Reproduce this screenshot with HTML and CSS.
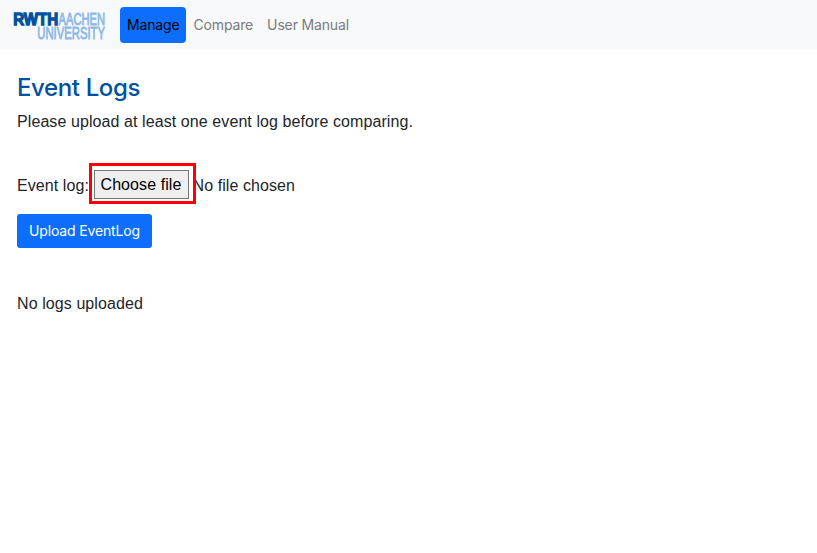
FILE: index.html
```
<!DOCTYPE html>
<html lang="en">
<head>
<meta charset="utf-8">
<title>Event Logs</title>
<link rel="stylesheet" href="styles.css">
</head>
<body>
<nav class="navbar">
  <svg class="logo" viewBox="0 0 94 34" role="img" aria-label="RWTH Aachen University">
    <text class="logo-strong" x="0.2" y="16.4" textLength="45" lengthAdjust="spacingAndGlyphs">RWTH</text>
    <text class="logo-light" x="45.5" y="16.4" textLength="46.5" lengthAdjust="spacingAndGlyphs">AACHEN</text>
    <text class="logo-light" x="24.3" y="29.7" textLength="67.7" lengthAdjust="spacingAndGlyphs">UNIVERSITY</text>
  </svg>
  <a class="nav-link active">Manage</a>
  <a class="nav-link compare">Compare</a>
  <a class="nav-link manual">User Manual</a>
</nav>
<main class="content">
  <h1 class="title">Event Logs</h1>
  <p class="intro">Please upload at least one event log before comparing.</p>
  <div class="file-row">
    <span class="file-label">Event log:</span>
    <span class="highlight"><button class="choose">Choose file</button></span>
    <span class="file-name">No file chosen</span>
  </div>
  <button class="upload">Upload EventLog</button>
  <p class="empty">No logs uploaded</p>
</main>
</body>
</html>
```
FILE: styles.css
```
* { box-sizing: border-box; }
body {
  margin: 0;
  background: #fff;
  color: #212529;
  font: 16px/24px "Liberation Sans", Arial, sans-serif;
  letter-spacing: .085px;
}
.navbar {
  display: flex;
  align-items: center;
  height: 50px;
  padding-left: 13px;
  background: #f8f9fa;
}
.logo { width: 94px; height: 34px; margin: 2px 13px 0 0; overflow: visible; }
.logo text { font-family: "Liberation Sans", Arial, sans-serif; font-size: 17px; letter-spacing: 0; }
.logo-strong { fill: #00519e; stroke: #00519e; stroke-width: 1.3px; font-weight: 700; }
.logo-light { fill: #8ebae5; stroke: #8ebae5; stroke-width: .9px; }
.nav-link {
  height: 36px;
  padding: 0 7px;
  border-radius: 4px;
  color: #7a7b7c;
  font: 14px/36px Inter, sans-serif;
  letter-spacing: -.15px;
  white-space: nowrap;
}
.active { width: 66px; background: #0d6efd; color: #000; }
.compare { padding-left: 7.5px; }
.content { padding: 23px 17px; }
.title {
  margin: 0;
  color: #0050a4;
  font: 500 24px/30px Inter, sans-serif;
  letter-spacing: -.38px;
}
.intro { margin: 7px 0 0; }
.file-row { display: flex; align-items: center; height: 41px; margin-top: 29px; }
.file-label { width: 71.5px; padding-top: 5px; white-space: nowrap; }
.highlight {
  position: relative;
  z-index: 1;
  display: flex;
  width: 107px;
  height: 41px;
  padding: 4px 3px 3px 2px;
  border: 3px solid #fb0007;
  background: #fff;
}
.choose {
  width: 95px;
  height: 29px;
  padding: 0;
  border: 1px solid #767676;
  background: #efefef;
  color: #000;
  font: 16px/27px "Liberation Sans", Arial, sans-serif;
  letter-spacing: .085px;
}
.file-name { margin-left: -3px; padding-top: 5px; }
.upload {
  display: block;
  width: 135px;
  height: 34px;
  margin-top: 10px;
  padding: 0;
  border: 0;
  border-radius: 3px;
  background: #0d6efd;
  color: #fff;
  font: 14px/34px Inter, sans-serif;
  letter-spacing: -.14px;
}
.empty { margin: 44px 0 0; }
```
